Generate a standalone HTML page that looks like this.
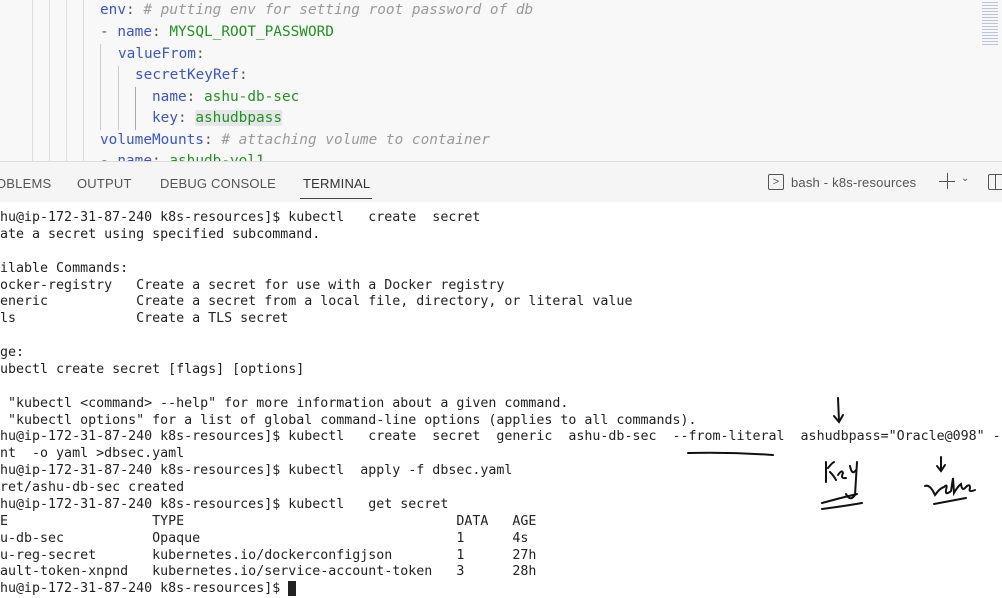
<!DOCTYPE html>
<html><head><style>
body{margin:0;width:1002px;height:592px;overflow:hidden;background:#fff;position:relative;font-family:"Liberation Sans",sans-serif}
#ed{position:absolute;left:0;top:0;width:1002px;height:161px;background:#f8f8f8;overflow:hidden}
.el{position:absolute;font-family:"DejaVu Sans Mono","Liberation Mono",monospace;font-size:14.4px;white-space:pre;color:#3a56c8}
.g{color:#22921f}.c{color:#9a9a9a;font-style:italic}.p{color:#555}
.guide{position:absolute;width:1px;background:#ddd}
#hdr{position:absolute;left:0;top:161px;width:1002px;height:40px;background:#f5f5f5;border-top:1px solid #ddd}
.tab{position:absolute;top:14px;font-size:13px;color:#555;letter-spacing:.2px}
#term{position:absolute;left:-24px;top:210px;width:1026px;overflow:hidden;font-family:"DejaVu Sans Mono",monospace;font-size:13.3px;line-height:16.87px;white-space:pre;color:#222}
</style></head><body>
<div id="ed">
<div class="guide" style="left:32px;top:0;height:161px"></div>
<div class="guide" style="left:49px;top:0;height:161px"></div>
<div class="guide" style="left:66px;top:0;height:161px"></div>
<div class="guide" style="left:83px;top:0;height:161px"></div>
<div class="guide" style="left:100px;top:44px;height:86px;background:#ccc"></div>
<div class="guide" style="left:118px;top:66px;height:64px;background:#ccc"></div>
<div class="guide" style="left:135px;top:87px;height:43px;background:#aaa"></div>
<div class="el" style="left:100px;top:2px">env<span class="p">:</span> <span class="c"># putting env for setting root password of db</span></div>
<div class="el" style="left:100px;top:24px"><span class="p">-</span> name<span class="p">:</span> <span class="g">MYSQL_ROOT_PASSWORD</span></div>
<div class="el" style="left:118px;top:46px">valueFrom<span class="p">:</span></div>
<div class="el" style="left:135px;top:67px">secretKeyRef<span class="p">:</span></div>
<div class="el" style="left:152px;top:89px">name<span class="p">:</span> <span class="g">ashu-db-sec</span></div>
<div class="el" style="left:152px;top:110px">key<span class="p">:</span> <span class="g" style="background:#e4e6ea;border-radius:2px">ashudbpass</span></div>
<div class="el" style="left:100px;top:132px">volumeMounts<span class="p">:</span> <span class="c"># attaching volume to container</span></div>
<div class="el" style="left:100px;top:153px"><span class="p">-</span> name<span class="p">:</span> <span class="g">ashudb-vol1</span></div>
<div style="position:absolute;left:982px;top:2px;width:16px;height:44px;opacity:.6;background:repeating-linear-gradient(#8fa0d8 0 1px,transparent 1px 3px)"></div>
</div>
<div id="hdr">
<div class="tab" style="left:-4px">OBLEMS</div>
<div class="tab" style="left:77px">OUTPUT</div>
<div class="tab" style="left:160px">DEBUG CONSOLE</div>
<div class="tab" style="left:303px;color:#333">TERMINAL</div>
<div style="position:absolute;left:300px;top:36px;width:72px;height:1px;background:#444"></div>
<div style="position:absolute;left:768px;top:12px;width:14px;height:14px;border:1px solid #555;border-radius:2px;font-size:11px;line-height:14px;text-align:center;color:#555">&gt;</div>
<div class="tab" style="left:791px;top:13px">bash - k8s-resources</div>
<div style="position:absolute;left:939px;top:19px;width:16px;height:1px;background:#555"></div>
<div style="position:absolute;left:947px;top:11px;width:1px;height:16px;background:#555"></div>
<div class="tab" style="left:961px;top:11px;font-size:10px">&#8964;</div>
<div style="position:absolute;left:988px;top:12px;width:16px;height:14px;border:1px solid #555;border-radius:2px"></div>
<div style="position:absolute;left:995px;top:12px;width:1px;height:15px;background:#555"></div>
</div>
<div id="term">[ashu@ip-172-31-87-240 k8s-resources]$ kubectl   create  secret
Create a secret using specified subcommand.

Available Commands:
  docker-registry   Create a secret for use with a Docker registry
  generic           Create a secret from a local file, directory, or literal value
  tls               Create a TLS secret

Usage:
  kubectl create secret [flags] [options]

Use "kubectl &lt;command&gt; --help" for more information about a given command.
Use "kubectl options" for a list of global command-line options (applies to all commands).
[ashu@ip-172-31-87-240 k8s-resources]$ kubectl   create  secret  generic  ashu-db-sec  --from-literal  ashudbpass="Oracle@098" --dry-run=c
lient  -o yaml &gt;dbsec.yaml
[ashu@ip-172-31-87-240 k8s-resources]$ kubectl  apply -f dbsec.yaml
secret/ashu-db-sec created
[ashu@ip-172-31-87-240 k8s-resources]$ kubectl   get secret
NAME                  TYPE                                  DATA   AGE
ashu-db-sec           Opaque                                1      4s
ashu-reg-secret       kubernetes.io/dockerconfigjson        1      27h
default-token-xnpnd   kubernetes.io/service-account-token   3      28h
[ashu@ip-172-31-87-240 k8s-resources]$ <span style="background:#222">&#160;</span></div>
<svg style="position:absolute;left:0;top:0" width="1002" height="592" fill="none" stroke="#111" stroke-width="2" stroke-linecap="round">
<path d="M688 453 Q730 452 773 455"/>
<path d="M838 398 L839 421 M834 416 L839 422 L843 415"/>
<path d="M826 462 L826 482 M828 468 Q832 463 834 462 M830 472 Q834 476 836 480 M838 475 Q842 469 843 473 Q840 479 846 478 M850 466 Q852 476 856 470 M857 462 L855 495 Q850 502 846 494 M822 503 Q840 498 857 494 M822 509 Q845 506 862 503"/>
<path d="M941 457 L941 470 M937 466 L941 471 L945 465 M925 486 Q930 484 935 495 Q940 488 944 487 Q948 483 946 490 Q945 496 951 491 L953 478 L954 493 Q958 486 961 484 Q962 492 966 487 Q970 483 970 488 Q968 493 975 490 M934 504 Q950 501 966 498"/>
</svg>
</body></html>
